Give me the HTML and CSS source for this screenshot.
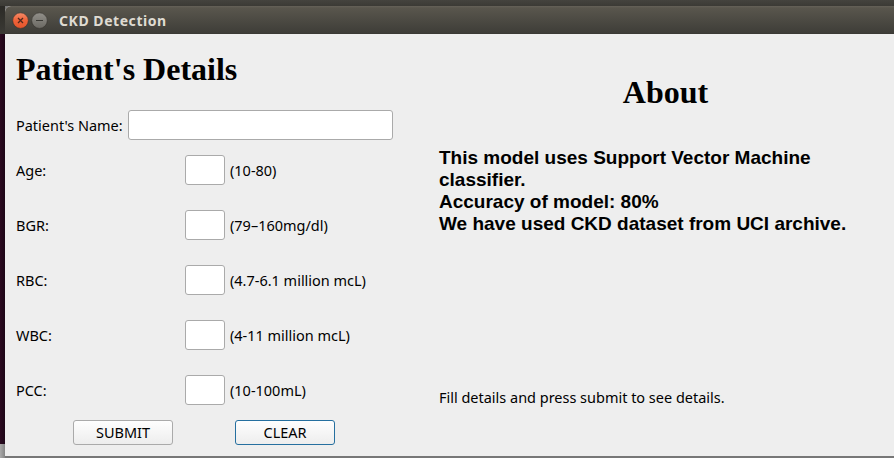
FILE: index.html
```html
<!DOCTYPE html>
<html lang="en">
<head>
<meta charset="utf-8">
<title>CKD Detection</title>
<link rel="stylesheet" href="styles.css">
</head>
<body>
<main class="window">
  <header class="titlebar">
    <svg class="controls" width="36" height="18" viewBox="0 0 36 18" aria-hidden="true">
      <defs>
        <linearGradient id="close" x2="0" y2="1"><stop stop-color="#f58b68"/><stop offset=".5" stop-color="#ef6238"/><stop offset="1" stop-color="#e4552c"/></linearGradient>
        <linearGradient id="min" x2="0" y2="1"><stop stop-color="#92908a"/><stop offset="1" stop-color="#6b6963"/></linearGradient>
      </defs>
      <circle cx="8.5" cy="8.6" r="7.8" fill="url(#close)" stroke="#35332e" stroke-width=".6"/>
      <path d="M6 6l5 5M11 6l-5 5" stroke="#51281d" stroke-width="1.3"/>
      <circle cx="27.5" cy="8.6" r="7.8" fill="url(#min)" stroke="#35332e" stroke-width=".6"/>
      <path d="M24 8.5h7" stroke="#3a3934" stroke-width="1"/>
    </svg>
    <span class="title">CKD Detection</span>
  </header>
  <div class="content">
    <form class="form">
      <h1 class="heading">Patient's Details</h1>
      <div class="row row-name"><label class="name-label" for="name">Patient's Name:</label><input class="field field-name" id="name"></div>
      <div class="row"><label class="label" for="age">Age:</label><input class="field" id="age"><span class="hint">(10-80)</span></div>
      <div class="row"><label class="label" for="bgr">BGR:</label><input class="field" id="bgr"><span class="hint">(79–160mg/dl)</span></div>
      <div class="row"><label class="label" for="rbc">RBC:</label><input class="field" id="rbc"><span class="hint">(4.7-6.1 million mcL)</span></div>
      <div class="row"><label class="label" for="wbc">WBC:</label><input class="field" id="wbc"><span class="hint">(4-11 million mcL)</span></div>
      <div class="row"><label class="label" for="pcc">PCC:</label><input class="field" id="pcc"><span class="hint">(10-100mL)</span></div>
      <div class="actions"><button class="button" type="button">SUBMIT</button><button class="button button-focus" type="button">CLEAR</button></div>
    </form>
    <section class="about">
      <h2 class="heading heading-about">About</h2>
      <p class="description">This model uses Support Vector Machine<br>classifier.<br>Accuracy of model: 80%<br>We have used CKD dataset from UCI archive.</p>
      <p class="status">Fill details and press submit to see details.</p>
    </section>
  </div>
</main>
</body>
</html>
```
FILE: styles.css
```css
* { box-sizing: border-box; }
body {
  margin: 0;
  height: 458px;
  overflow: hidden;
  padding: 6px 0 2px 5px;
  background:
    linear-gradient(#44433e, #3b3a35) 0 0 / 100% 6px no-repeat,
    linear-gradient(#2b2a26, #3b3a35) 0 6px / 5px 28px no-repeat,
    linear-gradient(90deg, #2b0a20, #1d0617) 0 34px / 5px 410px no-repeat,
    linear-gradient(90deg, #aaa, #858585) 0 444px / 5px 14px no-repeat,
    #777;
  font: 14.48px/20px "Noto Sans", sans-serif;
  color: #000;
}
.window {
  height: 450px;
  background: #eee;
  border-top-left-radius: 6px;
}
.titlebar {
  display: flex;
  height: 28px;
  padding-left: 7px;
  background: linear-gradient(#656158 0, #59564d 2px, #3e3d38 27px, #383732 28px);
  border-top-left-radius: 6px;
}
.controls { margin-top: 6px; }
.title {
  margin-left: 11px;
  font-size: 14px;
  font-weight: 700;
  line-height: 29px;
  letter-spacing: .55px;
  color: #dfdbd2;
}
.content { display: flex; padding-left: 11px; }
.form { width: 423px; }
.heading {
  margin: 0;
  font: 700 32px/38px "Liberation Serif", serif;
}
.form .heading { margin: 16px 0 22px; }
.row { display: flex; align-items: center; height: 30px; margin-bottom: 25px; }
.row-name { margin-bottom: 15px; }
.name-label { width: 112px; padding-top: 2px; white-space: nowrap; }
.label { width: 169px; padding-top: 2px; }
.field {
  width: 40px;
  height: 30px;
  padding: 0 6px;
  border: 1px solid #aaa;
  border-radius: 3px;
  background: #fff;
  font: inherit;
}
.field-name { width: 265px; }
.hint { margin-left: 5px; padding-top: 2px; white-space: nowrap; }
.actions { display: flex; gap: 62px; margin: -10px 0 0 57px; }
.button {
  width: 100px;
  height: 25px;
  padding: 0;
  border: 1px solid #aaa;
  border-radius: 3px;
  background: linear-gradient(#fefefe, #ededed);
  font: inherit;
  color: #000;
}
.button-focus { border-color: #256f9f; }
.about { width: 453px; }
.heading-about { margin-top: 39px; text-align: center; }
.description {
  margin: 36px 0 153px;
  font: 700 19px/22px "Liberation Sans", sans-serif;
  white-space: nowrap;
}
.status { margin: 0; }
```
